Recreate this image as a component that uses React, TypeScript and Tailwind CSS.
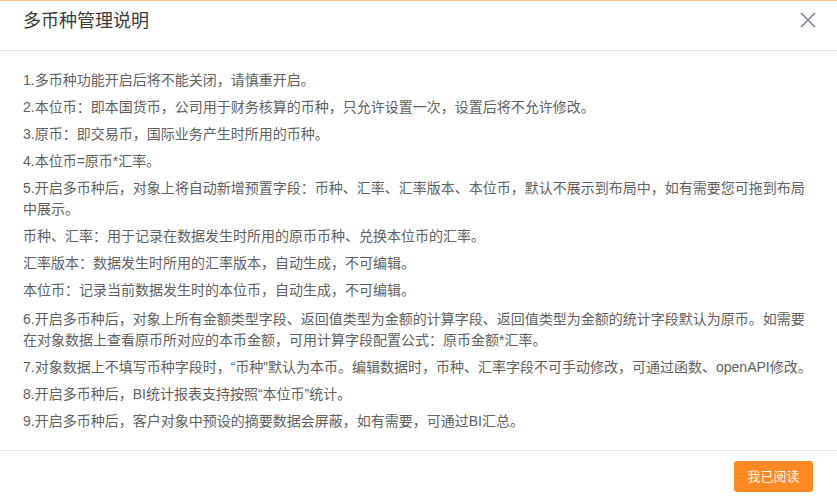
import React from 'react';

const items: { text: string; gap?: string }[] = [
  { text: '1.多币种功能开启后将不能关闭，请慎重开启。' },
  { text: '2.本位币：即本国货币，公司用于财务核算的币种，只允许设置一次，设置后将不允许修改。' },
  { text: '3.原币：即交易币，国际业务产生时所用的币种。' },
  { text: '4.本位币=原币*汇率。' },
  { text: '5.开启多币种后，对象上将自动新增预置字段：币种、汇率、汇率版本、本位币，默认不展示到布局中，如有需要您可拖到布局中展示。' },
  { text: '币种、汇率：用于记录在数据发生时所用的原币币种、兑换本位币的汇率。' },
  { text: '汇率版本：数据发生时所用的汇率版本，自动生成，不可编辑。' },
  { text: '本位币：记录当前数据发生时的本位币，自动生成，不可编辑。', gap: 'mb-[8px]' },
  { text: '6.开启多币种后，对象上所有金额类型字段、返回值类型为金额的计算字段、返回值类型为金额的统计字段默认为原币。如需要在对象数据上查看原币所对应的本币金额，可用计算字段配置公式：原币金额*汇率。' },
  { text: '7.对象数据上不填写币种字段时，“币种”默认为本币。编辑数据时，币种、汇率字段不可手动修改，可通过函数、openAPI修改。' },
  { text: '8.开启多币种后，BI统计报表支持按照“本位币”统计。' },
  { text: '9.开启多币种后，客户对象中预设的摘要数据会屏蔽，如有需要，可通过BI汇总。' },
];

export default function App() {
  return (
    <div
      className="w-[837px] h-[498px] bg-white flex flex-col border-t border-[#ffc38e] overflow-hidden"
      style={{ fontFamily: '"Liberation Sans", "Noto Sans CJK SC", sans-serif' }}
    >
      <div className="h-[50px] flex items-start justify-between pl-[23px] pr-[21px] pt-[8px] border-b border-[#e3e3e3]">
        <div className="text-[18px] leading-[24px] text-[#3a3a3a]">多币种管理说明</div>
        <button className="mt-[3px] w-[16px] h-[16px] flex items-center justify-center text-[#7c8591]">
          <svg width="16" height="16" viewBox="0 0 16 16" fill="none" stroke="currentColor" strokeWidth="1.6">
            <path d="M1 1L15 15M15 1L1 15" />
          </svg>
        </button>
      </div>
      <div className="flex-1 px-[23px] pt-[19px] text-[14px] leading-[21px] text-[#616161]">
        {items.map((it, i) => (
          <p key={i} className={it.gap ?? 'mb-[6px]'}>
            {it.text}
          </p>
        ))}
      </div>
      <div className="h-[48px] border-t border-[#e3e5e9] flex justify-end items-start pt-[10px] pr-[24px]">
        <button className="w-[79px] h-[31px] rounded-[3px] bg-[#ff8a24] text-[#fff4ea] text-[13px]">我已阅读</button>
      </div>
    </div>
  );
}
